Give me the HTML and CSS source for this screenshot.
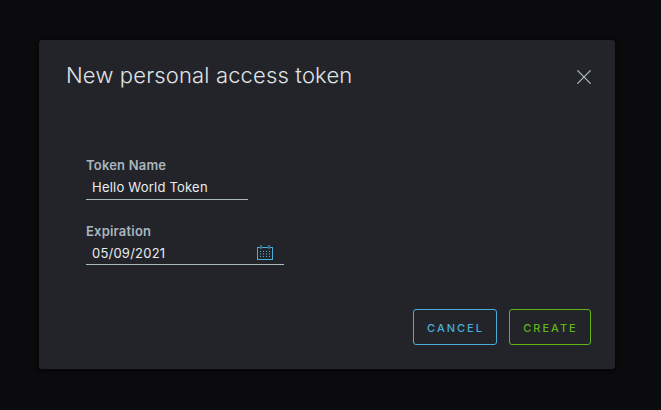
FILE: index.html
```html
<!DOCTYPE html>
<html lang="en">
<head>
<meta charset="utf-8">
<title>New personal access token</title>
<link rel="stylesheet" href="styles.css">
</head>
<body>
<main class="modal" role="dialog" aria-labelledby="title">
  <header class="modal-header">
    <h1 class="modal-title" id="title">New personal access token</h1>
    <button class="close" type="button" aria-label="Close">
      <svg width="14" height="14" viewBox="0 0 14 14"><path d="M.7.7l12.6 12.6M13.3.7L.7 13.3"/></svg>
    </button>
  </header>
  <form class="modal-body">
    <div class="field">
      <span class="label label-name">Token Name</span>
      <div class="control"><span class="value value-name">Hello World Token</span></div>
    </div>
    <div class="field">
      <span class="label label-date">Expiration</span>
      <div class="control control-date">
        <span class="value value-date">05/09/2021</span>
        <svg class="calendar" width="16" height="15" viewBox="0 0 16 15" shape-rendering="crispEdges">
          <path class="frame" d="M.5 2.5h15v12H.5z"/>
          <path class="ring" d="M3 0h2v4H3zM11 0h2v4h-2z"/>
          <path class="dots" d="M3 6h1v1H3zM6 6h1v1H6zM9 6h1v1H9zM12 6h1v1h-1zM3 11h1v1H3zM6 11h1v1H6zM9 11h1v1H9zM12 11h1v1h-1z"/>
          <path class="dots soft" d="M3 8h1v2H3zM6 8h1v2H6zM9 8h1v2H9zM12 8h1v2h-1z"/>
        </svg>
      </div>
    </div>
  </form>
  <footer class="modal-footer">
    <button class="btn btn-cancel" type="button">CANCEL</button>
    <button class="btn btn-create" type="button">CREATE</button>
  </footer>
</main>
</body>
</html>
```
FILE: styles.css
```css
* { box-sizing: border-box; }
body {
  margin: 0;
  height: 410px;
  padding: 40px 46px 41px 39px;
  background: #0b0b0d;
  font-family: Inter, "Open Sans", sans-serif;
  overflow: hidden;
}
.modal {
  display: flex;
  flex-direction: column;
  width: 576px;
  height: 329px;
  padding: 24px 24px 24px 27px;
  border-radius: 3px;
  background: #22242a;
  box-shadow: 0 1px 3px 2px #08080a;
}
.modal-header { display: flex; justify-content: space-between; height: 24px; }
.modal-title {
  margin: 0;
  color: #e0e3e6;
  font-size: 22px;
  font-weight: 300;
  line-height: 22px;
  letter-spacing: 0.16px;
  white-space: nowrap;
}
.close { display: flex; margin: 6px 0 0; padding: 0; width: 14px; height: 14px; border: 0; background: none; }
.close path { fill: none; stroke: #b0bec5; stroke-width: 1.2; stroke-linecap: round; }
.modal-body {
  display: flex;
  flex-direction: column;
  gap: 23px;
  flex: 1;
  padding: 69px 0 0 20px;
}
.field { height: 43px; }
.field + .field { height: 42px; }
.label {
  display: block;
  width: max-content;
  height: 18px;
  color: #a9b6be;
  font-size: 13px;
  font-weight: 600;
  line-height: 17px;
  letter-spacing: 0.2px;
}
.control {
  display: flex;
  align-items: center;
  justify-content: space-between;
  width: 162px;
  height: 25px;
  padding: 0 11px 0 6px;
  border-bottom: 1px solid #acbac3;
}
.control-date { width: 198px; height: 24px; }
.value { color: #e9ecef; font-size: 13px; line-height: 24px; letter-spacing: 0.22px; white-space: nowrap; }
.calendar { display: block; }
.frame { fill: none; stroke: #49afd9; }
.ring { fill: #3d6e88; }
.dots { fill: #49afd9; }
.soft { opacity: 0.6; }
.modal-footer { display: flex; justify-content: flex-end; gap: 12px; }
.btn {
  height: 36px;
  width: 84px;
  padding: 2px 0 0 1px;
  border: 1px solid;
  border-radius: 3px;
  background: none;
  font: 500 11px/16px Inter, "Open Sans", sans-serif;
  letter-spacing: 2px;
}
.btn-cancel { color: #49afd9; }
.btn-create { width: 82px; color: #60b515; }
```
